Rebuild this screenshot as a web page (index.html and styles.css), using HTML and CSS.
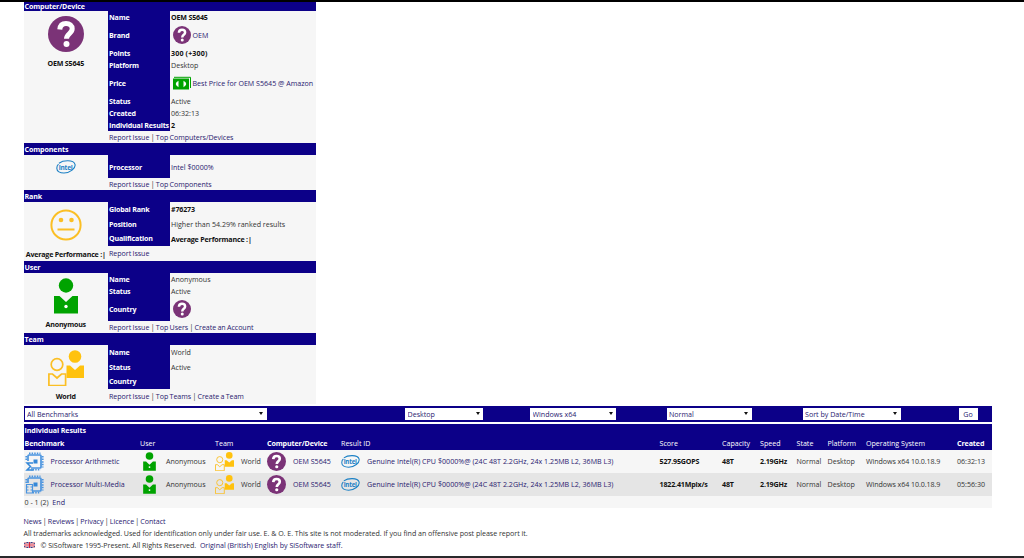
FILE: index.html
```html
<!DOCTYPE html>
<html lang="en">
<head>
    <meta charset="UTF-8">
    <title>OEM S5645 - Details for Computer/Device</title>
    <link rel="stylesheet" href="styles.css">
</head>
<body>
    <!-- shared icons -->
    <svg class="defs" width="0" height="0">
        <symbol id="question" viewBox="0 0 36 36">
            <circle cx="18" cy="18" r="18" fill="#7b3377"/>
            <path d="M11.800 13.500c.3-4.200 2.900-6 6.200-6 3.600 0 6.200 2.100 6.200 5.300 0 4.900-5.700 4.700-5.700 10" fill="none" stroke="#fff" stroke-width="5"/>
            <circle cx="18.500" cy="28" r="3" fill="#fff"/>
        </symbol>
        <symbol id="user" viewBox="0 0 24 36">
            <circle cx="12" cy="7.500" r="7.200" fill="#00a300"/>
            <path d="M0 18h5.500l6.500 6 6.500-6H24v17.500H0z" fill="#00a300"/>
            <circle cx="12" cy="28.500" r="1.700" fill="#fff"/>
        </symbol>
        <symbol id="team" viewBox="0 0 36 36">
            <circle cx="27" cy="6.500" r="6.300" fill="#ffc20e"/>
            <path d="M18.500 15.500H22l5 4.500 5-4.500h4V28H18.500z" fill="#ffc20e"/>
            <g fill="none" stroke="#fbbf24" stroke-width="1.700">
                <circle cx="9" cy="14.500" r="5.800"/>
                <path d="M.9 24h3.600L9 28l4.500-4h4.100v11.500H.9z"/>
            </g>
        </symbol>
        <symbol id="intel" viewBox="0 0 20 14">
            <path d="M3 3.200C7 .2 17.500-.5 19 4.300c1 4-5 8.700-11 8.700C4 13 .8 11.500.8 8.300.8 6.600 1.600 5 2.500 4.200" fill="none" stroke="#1b80c5" stroke-width="1.100"/>
            <text x="2.800" y="9.500" class="intel-text" textLength="14">intel</text>
        </symbol>
        <symbol id="chip" viewBox="0 0 19 19">
            <g fill="none" stroke="#4a94df">
                <rect x="3" y="3" width="13" height="13" rx="1" stroke-width="1.700"/>
                <path d="M4 1.300h11.500M17.700 4v11.500M5 17.700h10.500M1.300 4v10" stroke-width="1.800" stroke-dasharray="1.500 1.100"/>
            </g>
            <rect x="8.500" y="7.500" width="4" height="4" fill="#3588d8"/>
        </symbol>
    </svg>

    <div class="card">
        <h2 class="first">Computer/Device</h2>
        <div class="side">
            <svg class="big"><use href="#question"/></svg>
            <b>OEM S5645</b>
        </div>
        <dl>
            <dt>Name</dt><dd><b>OEM S5645</b></dd>
            <dt class="tall">Brand</dt><dd><svg class="mid"><use href="#question"/></svg><a href="#">OEM</a></dd>
            <dt>Points</dt><dd><b class="points">300 (+300)</b></dd>
            <dt>Platform</dt><dd>Desktop</dd>
            <dt class="tall">Price</dt>
            <dd>
                <svg class="mid" viewBox="0 0 18 18">
                    <path d="M1 3.300h16.500V14" fill="none" stroke="#00a300" stroke-width="1"/>
                    <rect x="0" y="4.500" width="16" height="11" fill="#00a300"/>
                    <path d="M5.500 6.800Q0 10 5.500 13.200zM10.500 6.800q5.500 3.200 0 6.400z" fill="#fff"/>
                </svg><a href="#">Best Price for OEM S5645 @ Amazon</a>
            </dd>
            <dt>Status</dt><dd>Active</dd>
            <dt>Created</dt><dd>06:32:13</dd>
            <dt>Individual Results</dt><dd><b>2</b></dd>
        </dl>
        <p class="links"><a href="#">Report Issue</a> | <a href="#">Top Computers/Devices</a></p>
    </div>

    <div class="card">
        <h2>Components</h2>
        <div class="side"><svg class="logo"><use href="#intel"/></svg></div>
        <dl>
            <dt class="comp">Processor</dt><dd><a href="#">Intel $0000%</a></dd>
        </dl>
        <p class="links"><a href="#">Report Issue</a> | <a href="#">Top Components</a></p>
    </div>

    <div class="card">
        <h2>Rank</h2>
        <div class="side">
            <svg class="big" viewBox="0 0 36 36">
                <g fill="none" stroke="#fbbf24" stroke-width="2">
                    <circle cx="18" cy="18" r="14.600"/>
                    <path d="M9.500 22.500h17"/>
                </g>
                <circle cx="13" cy="13" r="2.300" fill="#fbbf24"/>
                <circle cx="23.500" cy="13" r="2.300" fill="#fbbf24"/>
            </svg>
            <b>Average Performance :|</b>
        </div>
        <dl class="loose">
            <dt>Global Rank</dt><dd><b>#76273</b></dd>
            <dt>Position</dt><dd>Higher than 54.29% ranked results</dd>
            <dt>Qualification</dt><dd><b>Average Performance :|</b></dd>
        </dl>
        <p class="links high"><a href="#">Report Issue</a></p>
    </div>

    <div class="card">
        <h2>User</h2>
        <div class="side">
            <svg class="big"><use href="#user"/></svg>
            <b>Anonymous</b>
        </div>
        <dl>
            <dt>Name</dt><dd>Anonymous</dd>
            <dt>Status</dt><dd>Active</dd>
            <dt class="tall">Country</dt><dd><svg class="mid"><use href="#question"/></svg></dd>
        </dl>
        <p class="links"><a href="#">Report Issue</a> | <a href="#">Top Users</a> | <a href="#">Create an Account</a></p>
    </div>

    <div class="card">
        <h2>Team</h2>
        <div class="side">
            <svg class="big"><use href="#team"/></svg>
            <b>World</b>
        </div>
        <dl class="loose">
            <dt>Name</dt><dd>World</dd>
            <dt>Status</dt><dd>Active</dd>
            <dt>Country</dt><dd></dd>
        </dl>
        <p class="links high"><a href="#">Report Issue</a> | <a href="#">Top Teams</a> | <a href="#">Create a Team</a></p>
    </div>

    <form class="filters">
        <span class="select"><select><option>All Benchmarks</option></select></span>
        <span class="select"><select><option>Desktop</option></select></span>
        <span class="select"><select><option>Windows x64</option></select></span>
        <span class="select"><select><option>Normal</option></select></span>
        <span class="select"><select><option>Sort by Date/Time</option></select></span>
        <button type="button">Go</button>
    </form>

    <div class="results">
        <h2>Individual Results</h2>
        <div class="row head">
            <b>Benchmark</b><span>User</span><span>Team</span><b>Computer/Device</b><span>Result ID</span><span>Score</span><span>Capacity</span><span>Speed</span><span>State</span><span>Platform</span><span>Operating System</span><b>Created</b>
        </div>
        <div class="row">
            <span class="ic">
                <svg viewBox="0 0 19 19"><use href="#chip"/><path d="M0 9h6v10H0z" fill="#f6f6f6"/><path d="M8 11H2l3.500 3.500L2 18h6.500" fill="none" stroke="#3588d8" stroke-width="1.500"/></svg>
                <a href="#">Processor Arithmetic</a>
            </span>
            <span class="ic"><svg><use href="#user"/></svg>Anonymous</span>
            <span class="ic"><svg><use href="#team"/></svg>World</span>
            <span class="ic"><svg><use href="#question"/></svg><a href="#">OEM S5645</a></span>
            <span class="ic"><svg><use href="#intel"/></svg><a class="rid" href="#">Genuine Intel(R) CPU $0000%@ (24C 48T 2.2GHz, 24x 1.25MB L2, 36MB L3)</a></span>
            <b>527.95GOPS</b><b>48T</b><b>2.19GHz</b><span>Normal</span><span>Desktop</span><span class="os">Windows x64 10.0.18.9</span><span>06:32:13</span>
        </div>
        <div class="row alt">
            <span class="ic">
                <svg viewBox="0 0 19 19"><use href="#chip"/><path d="M0 8h8v11H0z" fill="#e5e5e5"/><path d="M1.500 9.500H7.500V18H1.500zM1.500 12H3.500M1.500 15H3.500M5.500 12H7.500M5.500 15H7.500" fill="none" stroke="#4a94df" stroke-width="1.200"/></svg>
                <a href="#">Processor Multi-Media</a>
            </span>
            <span class="ic"><svg><use href="#user"/></svg>Anonymous</span>
            <span class="ic"><svg><use href="#team"/></svg>World</span>
            <span class="ic"><svg><use href="#question"/></svg><a href="#">OEM S5645</a></span>
            <span class="ic"><svg><use href="#intel"/></svg><a class="rid" href="#">Genuine Intel(R) CPU $0000%@ (24C 48T 2.2GHz, 24x 1.25MB L2, 36MB L3)</a></span>
            <b>1822.41Mpix/s</b><b>48T</b><b>2.19GHz</b><span>Normal</span><span>Desktop</span><span class="os">Windows x64 10.0.18.9</span><span>05:56:30</span>
        </div>
        <p class="pager">0 - 1 (2) &nbsp;<a href="#">End</a></p>
    </div>

    <footer>
        <p class="site"><a href="#">News</a> | <a href="#">Reviews</a> | <a href="#">Privacy</a> | <a href="#">Licence</a> | <a href="#">Contact</a></p>
        <p class="legal">All trademarks acknowledged. Used for identification only under fair use. E. &amp; O. E. This site is not moderated. If you find an offensive post please report it.</p>
        <p class="copy">
            <svg class="flag" viewBox="0 0 11 6">
                <rect width="11" height="6" fill="#34408a"/>
                <path d="M0 0l11 6M11 0L0 6" stroke="#fff" stroke-width="1.200"/>
                <path d="M0 0l11 6M11 0L0 6" stroke="#d22" stroke-width=".5"/>
                <path d="M5.500 0v6M0 3h11" stroke="#fff" stroke-width="2"/>
                <path d="M5.500 0v6M0 3h11" stroke="#d8203a" stroke-width="1.200"/>
            </svg>
            <span>© SiSoftware 1995-Present. All Rights Reserved. &nbsp;<a href="#">Original (British) English by SiSoftware staff.</a></span>
        </p>
    </footer>
</body>
</html>
```
FILE: styles.css
```css
* {
    box-sizing: border-box;
}
body {
    margin: 0;
    height: 558px;
    overflow: hidden;
    padding-left: 23.500px;
    border-top: 2px solid #000;
    border-bottom: 2px solid #29292b;
    background-color: #fff;
    color: #333;
    font-family: "Open Sans", "Noto Sans", sans-serif;
    font-size: 7.100px;
    line-height: 12px;
    white-space: nowrap;
}
.defs {
    display: none;
}
a {
    color: #29206f;
    text-decoration: none;
}
b {
    color: #111;
    font-weight: 700;
    letter-spacing: -0.17px;
}
h2, p, dl, dd {
    margin: 0;
}
h2 {
    height: 12px;
    padding-left: 1px;
    background-color: #0c0088;
    color: #fff;
    font-size: 7.100px;
    line-height: 12px;
    letter-spacing: -0.1px;
}
.card {
    display: grid;
    grid-template-columns: 84.500px 208px;
    width: 292.500px;
    background-color: #f6f6f6;
}
.card h2 {
    grid-column: 1 / 3;
}
.card h2.first {
    height: 9px;
    line-height: 8px;
}
.side {
    grid-row: 2 / 4;
    display: flex;
    flex-direction: column;
    align-items: center;
    padding-top: 5px;
}
.side b {
    margin-top: 4.500px;
    letter-spacing: -0.2px;
}
.big {
    width: 36px;
    height: 36px;
}
.logo {
    width: 20px;
    height: 14px;
}
dl {
    display: grid;
    grid-template-columns: 62px 1fr;
}
dt {
    height: 12px;
    padding-left: 1px;
    background-color: #0c0088;
    color: #fff;
    font-weight: 700;
    letter-spacing: -0.18px;
}
dd {
    display: flex;
    align-items: center;
    padding-left: 1px;
}
dt.tall {
    height: 24px;
    line-height: 24px;
}
dt.comp {
    height: 23px;
    line-height: 24px;
}
.loose dt {
    height: 14.670px;
    line-height: 14.670px;
}
.mid {
    width: 18px;
    height: 18px;
    margin: 0 1.500px 0 2px;
}
.points {
    letter-spacing: 0.150px;
}
.links {
    height: 12px;
    padding-left: 1px;
    line-height: 13px;
    letter-spacing: -0.040px;
    word-spacing: -0.500px;
}
.links.high {
    height: 15px;
    line-height: 15px;
}
.filters {
    display: grid;
    grid-template-columns: 380.500px 125px 136.500px 136px 156px 19px;
    align-items: center;
    width: 968px;
    height: 16px;
    margin-top: 2px;
    padding-left: 1px;
    background-color: #0c0088;
}
.select {
    position: relative;
    width: 242px;
    height: 12px;
}
.select:nth-child(2) {
    width: 78px;
}
.select:nth-child(3) {
    width: 86px;
}
.select:nth-child(4) {
    width: 85px;
}
.select:nth-child(5) {
    width: 98px;
}
.select::after {
    content: "";
    position: absolute;
    right: 3.500px;
    top: 4px;
    border: 2px solid transparent;
    border-top: 3.500px solid #111;
    border-bottom: 0;
}
select, button {
    display: block;
    width: 100%;
    height: 12px;
    padding: 0 2.500px;
    border: 0;
    border-radius: 0;
    appearance: none;
    background-color: #fff;
    color: #29206f;
    font: 7.100px/12px "Open Sans", "Noto Sans", sans-serif;
}
.results {
    width: 968px;
    margin-top: 2px;
    background-color: #f6f6f6;
}
.results h2 {
    height: 13px;
    line-height: 13px;
}
.row {
    display: grid;
    grid-template-columns: 115.500px 75px 52px 74px 318.500px 62.500px 38px 36.500px 31px 38.500px 91px 34px;
    align-items: center;
    height: 23px;
    padding-left: 1px;
}
.row.head {
    height: 13px;
    background-color: #0c0088;
    color: #fff;
}
.head b {
    color: #fff;
    letter-spacing: -0.1px;
}
.alt {
    background-color: #e5e5e5;
}
.ic {
    display: flex;
    align-items: center;
}
.ic svg {
    width: 19px;
    height: 19px;
    margin-right: 7px;
}
.rid {
    letter-spacing: 0.015px;
}
.os {
    letter-spacing: -0.060px;
}
.intel-text {
    fill: #1b80c5;
    font: 700 6.500px "Open Sans", sans-serif;
}
.pager {
    height: 12px;
    padding-left: 1px;
}
footer {
    padding-top: 7.500px;
}
.site {
    letter-spacing: -0.040px;
    word-spacing: -0.600px;
}
.legal {
    letter-spacing: -0.028px;
}
.copy {
    display: flex;
    align-items: center;
    letter-spacing: -0.020px;
}
.flag {
    width: 11px;
    height: 6px;
    margin-right: 6px;
}
```
